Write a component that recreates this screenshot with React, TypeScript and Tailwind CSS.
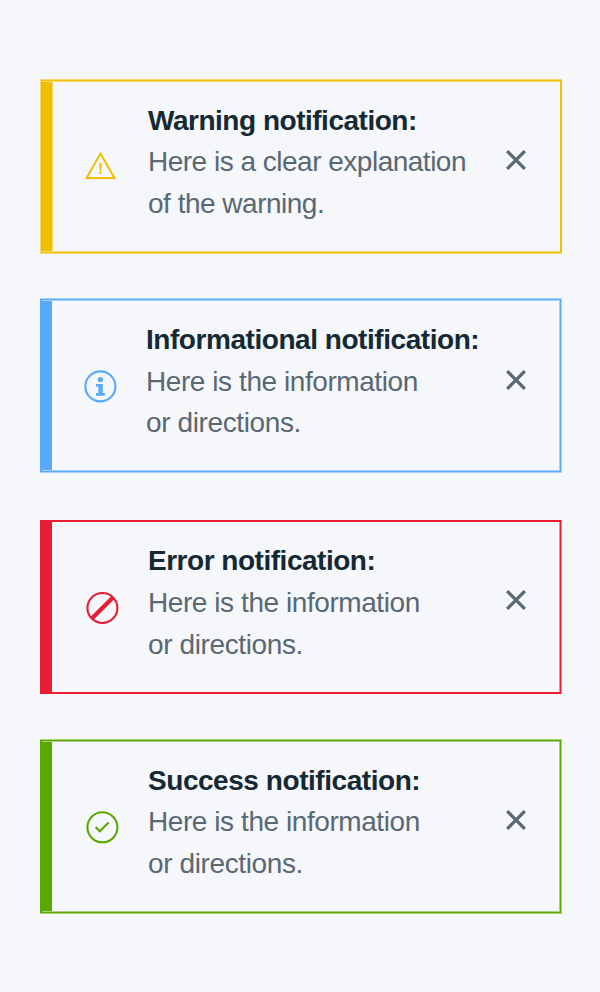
import React from "react";

type Kind = "warning" | "info" | "error" | "success";

type Notice = {
  kind: Kind;
  title: string;
  lines: [string, string];
  card: string;
  outer: string;
  middle: string;
  inner: string;
  edge: string;
  bar: string;
  icon: string;
  text: string;
  heading: string;
  body: [string, string];
  close: string;
};

const notices: Notice[] = [
  {
    kind: "warning",
    title: "Warning notification:",
    lines: ["Here is a clear explanation", "of the warning."],
    card: "mt-[79px] h-[175px]",
    outer: "border-y border-[#f4d974]",
    middle: "border-y border-r border-[#f0c000]",
    inner: "border-y border-r border-t-[#f4d974] border-b-[#f4d974] border-r-[#f0c000]",
    edge: "bg-[#f0c000] border-l border-y border-[#f4d974]",
    bar: "w-[11px] bg-[#f0c000] border-r border-[#f4d974]",
    icon: "ml-[32px] mt-[70px]",
    text: "ml-[29px] mt-[18px]",
    heading: "h-[41px] tracking-[-0.48px]",
    body: ["h-[42px] tracking-[-0.5px]", "h-[42px] tracking-[-0.5px]"],
    close: "mr-[33px] mt-[67px]",
  },
  {
    kind: "info",
    title: "Informational notification:",
    lines: ["Here is the information", "or directions."],
    card: "mt-[44px] h-[175px]",
    outer: "border-y border-r border-[#a8d0fa]",
    middle: "border-y border-r border-[#5aaafa]",
    inner: "border-y border-r border-[#a8d0fa]",
    edge: "bg-[#5aaafa] border-y border-[#a8d0fa]",
    bar: "w-[10px] bg-[#5aaafa]",
    icon: "ml-[32px] mt-[69px]",
    text: "ml-[28px] mt-[18px]",
    heading: "h-[42px] tracking-[-0.45px]",
    body: ["h-[41px] tracking-[-0.43px]", "h-[41px] tracking-[-0.38px]"],
    close: "mr-[32px] mt-[68px]",
  },
  {
    kind: "error",
    title: "Error notification:",
    lines: ["Here is the information", "or directions."],
    card: "mt-[47px] h-[174px]",
    outer: "border-y border-r border-y-[#e71d32] border-r-[#ef8c98]",
    middle: "border-y border-r border-[#e71d32]",
    inner: "border-r border-[#ef8c98]",
    edge: "bg-[#e71d32]",
    bar: "w-[10px] bg-[#e71d32]",
    icon: "ml-[34px] mt-[70px]",
    text: "ml-[28px] mt-[18px]",
    heading: "h-[42px] tracking-[-0.48px]",
    body: ["h-[42px] tracking-[-0.43px]", "h-[42px] tracking-[-0.38px]"],
    close: "mr-[32px] mt-[67px]",
  },
  {
    kind: "success",
    title: "Success notification:",
    lines: ["Here is the information", "or directions."],
    card: "mt-[45px] h-[175px]",
    outer: "border-y border-r border-[#a8d07e]",
    middle: "border-y border-r border-[#5aa700]",
    inner: "border-y border-r border-[#a8d07e]",
    edge: "bg-[#5aa700] border-y border-[#a8d07e]",
    bar: "w-[10px] bg-[#5aa700]",
    icon: "ml-[34px] mt-[69px]",
    text: "ml-[28px] mt-[18px]",
    heading: "h-[41px] tracking-[-0.45px]",
    body: ["h-[42px] tracking-[-0.43px]", "h-[42px] tracking-[-0.38px]"],
    close: "mr-[32px] mt-[67px]",
  },
];

function StatusIcon({ kind }: { kind: Kind }) {
  if (kind === "warning")
    return (
      <svg width="32" height="32" viewBox="0 0 32 32" fill="none" stroke="#f0c000" strokeWidth="2">
        <path d="M15.5 1.6 L29.4 26 H1.6 Z" />
        <path d="M14.2 11 H16.8 L16.1 19.4 H14.9 Z" fill="#f0c000" stroke="none" />
        <circle cx="15.5" cy="21.2" r="1.1" fill="#f0c000" stroke="none" />
      </svg>
    );
  if (kind === "info")
    return (
      <svg width="34" height="34" viewBox="0 0 34 34" fill="none">
        <circle cx="16.4" cy="16.4" r="15" stroke="#5aaafa" strokeWidth="2.1" />
        <circle cx="16.4" cy="9.6" r="2.6" fill="#5aaafa" />
        <path d="M12 14 H18.8 V23.1 H20.9 V25.8 H12 V23.1 H14.4 V16.6 H12 Z" fill="#5aaafa" />
      </svg>
    );
  if (kind === "error")
    return (
      <svg width="34" height="34" viewBox="0 0 34 34" fill="none" stroke="#e71d32">
        <circle cx="16.4" cy="16" r="15" strokeWidth="2.1" />
        <path d="M27 5.4 L5.8 26.6" strokeWidth="4.2" />
      </svg>
    );
  return (
    <svg width="34" height="34" viewBox="0 0 34 34" fill="none" stroke="#5aa700" strokeWidth="2.1">
      <circle cx="16.4" cy="16.3" r="15" />
      <path d="M9.6 16 L13.8 20.2 L22.6 11.5" />
    </svg>
  );
}

function CloseButton({ className }: { className: string }) {
  return (
    <button aria-label="Close" className={`ml-auto size-[22px] shrink-0 ${className}`}>
      <svg width="22" height="22" viewBox="0 0 22 22" fill="none" stroke="#5a6872" strokeWidth="3.3">
        <path d="M2.2 2.2 L19.8 19.8 M19.8 2.2 L2.2 19.8" />
      </svg>
    </button>
  );
}

function Notification({ item }: { item: Notice }) {
  return (
    <section className={`flex w-[522px] ${item.card}`}>
      <div className={`w-[2px] shrink-0 ${item.edge}`} />
      <div className={`flex grow ${item.outer}`}>
        <div className={`flex grow ${item.middle}`}>
          <div className={`flex grow ${item.inner}`}>
            <div className={`shrink-0 ${item.bar}`} />
            <div className={`w-[34px] shrink-0 ${item.icon}`}>
              <StatusIcon kind={item.kind} />
            </div>
            <div className={`w-0 text-[28px] leading-[42px] whitespace-nowrap text-[#5a6872] ${item.text}`}>
              <h2 className={`font-bold text-[#152934] ${item.heading}`}>{item.title}</h2>
              <p className={item.body[0]}>{item.lines[0]}</p>
              <p className={item.body[1]}>{item.lines[1]}</p>
            </div>
            <CloseButton className={item.close} />
          </div>
        </div>
      </div>
    </section>
  );
}

export default function App() {
  return (
    <main className="flex h-[992px] w-[600px] flex-col overflow-hidden bg-[#f5f7fb] pl-[40px] font-['Liberation_Sans',Arial,sans-serif]">
      {notices.map((item) => (
        <Notification key={item.kind} item={item} />
      ))}
    </main>
  );
}
